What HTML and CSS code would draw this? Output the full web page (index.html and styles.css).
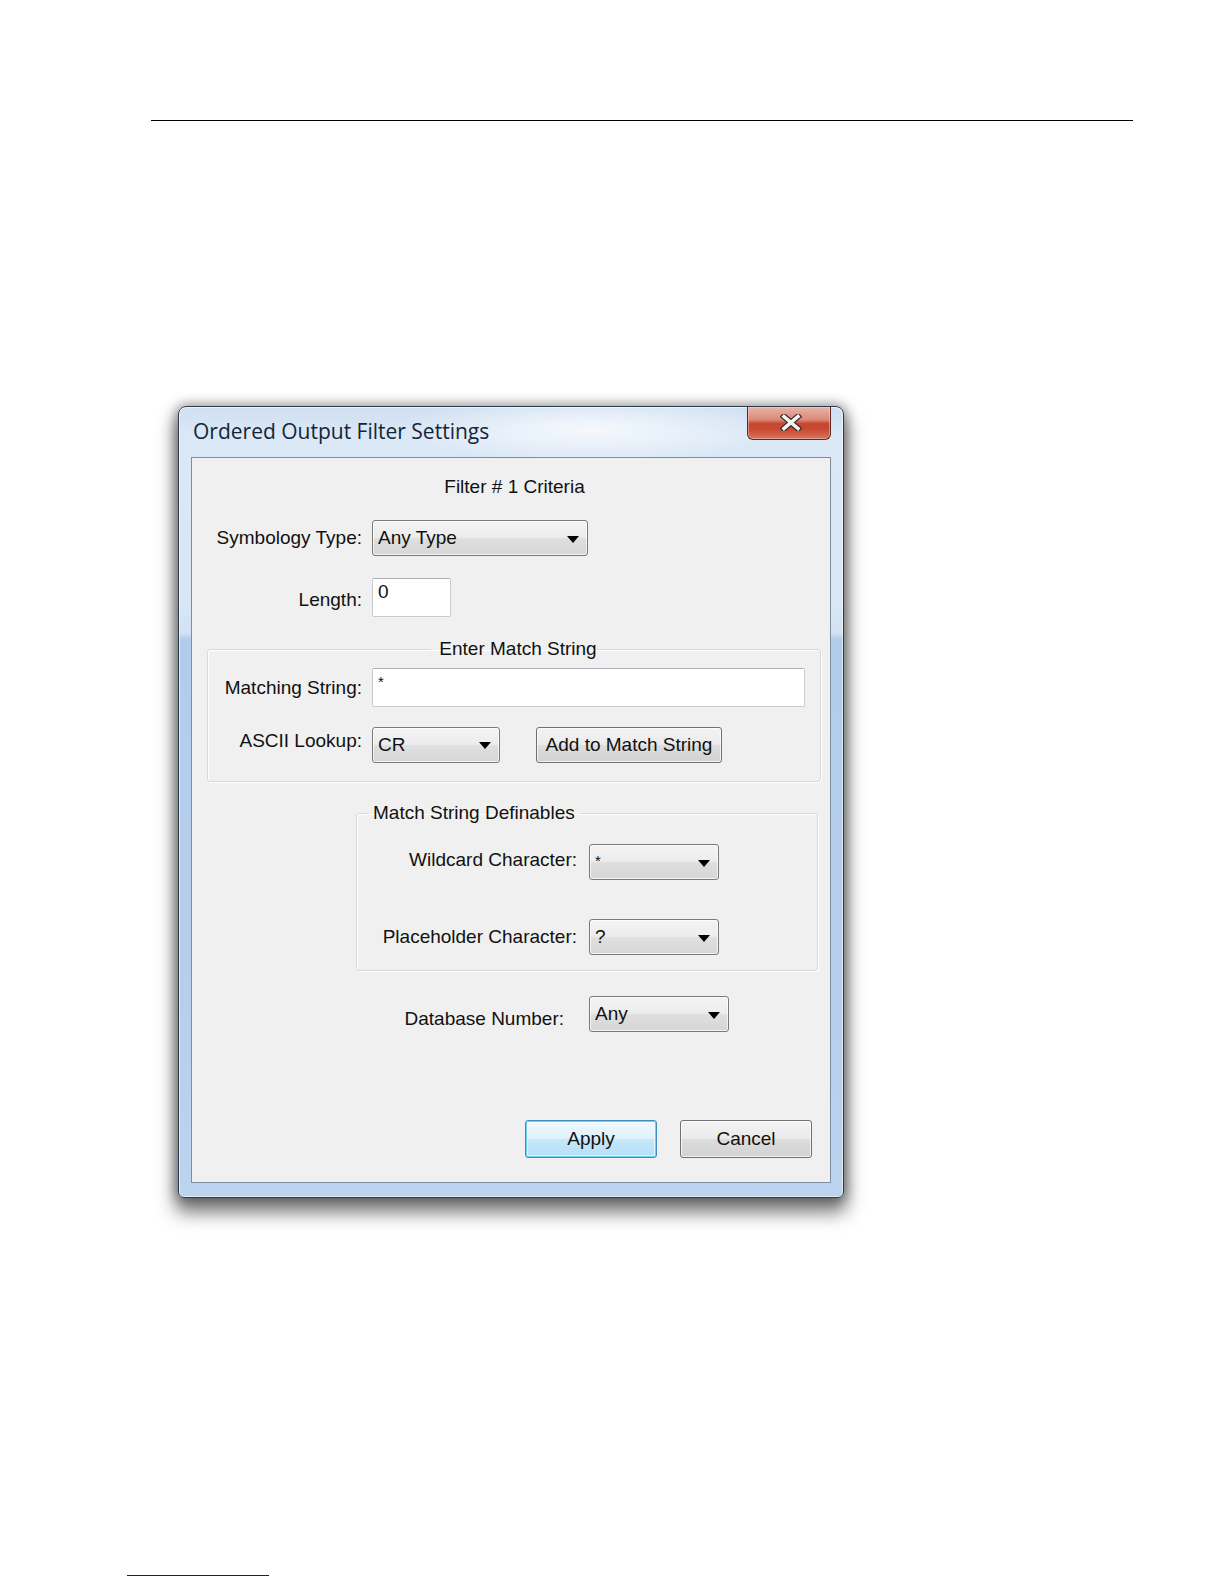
FILE: index.html
```html
<!DOCTYPE html>
<html lang="en">
<head>
<meta charset="utf-8">
<title>Ordered Output Filter Settings</title>
<link rel="stylesheet" href="styles.css">
</head>
<body>
<div class="page">
  <div class="rule-top"></div>

  <div class="window">
    <div class="titlebar">
      <div class="title">Ordered Output Filter Settings</div>
      <div class="close-btn">
        <svg width="22" height="17" viewBox="0 0 22 17" aria-hidden="true">
          <path d="M4 2.5 L18 14.5 M18 2.5 L4 14.5" stroke="#3b2a28" stroke-width="6" stroke-linecap="square" fill="none"/>
          <path d="M4 2.5 L18 14.5 M18 2.5 L4 14.5" stroke="#f4f4f4" stroke-width="3.6" stroke-linecap="square" fill="none"/>
        </svg>
      </div>
    </div>

    <div class="panel">
      <div class="heading">Filter # 1 Criteria</div>

      <div class="row row-symb">
        <div class="lbl lbl-main">Symbology Type:</div>
        <div class="combo combo-symb"><span class="combo-text">Any Type</span><svg class="arrow" width="12" height="7" viewBox="0 0 12 7"><path d="M0 0 H12 L6 7 Z" fill="#000"/></svg></div>
      </div>

      <div class="row row-len">
        <div class="lbl lbl-main lbl-len">Length:</div>
        <div class="textbox textbox-len">0</div>
      </div>

      <fieldset class="group group-match">
        <legend class="legend legend-center">Enter Match String</legend>
        <div class="row row-matching">
          <div class="lbl lbl-g1">Matching String:</div>
          <div class="textbox textbox-match">*</div>
        </div>
        <div class="row row-ascii">
          <div class="lbl lbl-g1 lbl-ascii">ASCII Lookup:</div>
          <div class="combo combo-ascii"><span class="combo-text">CR</span><svg class="arrow" width="12" height="7" viewBox="0 0 12 7"><path d="M0 0 H12 L6 7 Z" fill="#000"/></svg></div>
          <div class="btn btn-add">Add to Match String</div>
        </div>
      </fieldset>

      <fieldset class="group group-defs">
        <legend class="legend legend-left">Match String Definables</legend>
        <div class="row row-wild">
          <div class="lbl lbl-g2 lbl-wild">Wildcard Character:</div>
          <div class="combo combo-char"><span class="combo-text combo-star">*</span><svg class="arrow" width="12" height="7" viewBox="0 0 12 7"><path d="M0 0 H12 L6 7 Z" fill="#000"/></svg></div>
        </div>
        <div class="row row-place">
          <div class="lbl lbl-g2">Placeholder Character:</div>
          <div class="combo combo-char"><span class="combo-text">?</span><svg class="arrow" width="12" height="7" viewBox="0 0 12 7"><path d="M0 0 H12 L6 7 Z" fill="#000"/></svg></div>
        </div>
      </fieldset>

      <div class="row row-db">
        <div class="lbl lbl-db">Database Number:</div>
        <div class="combo combo-db"><span class="combo-text">Any</span><svg class="arrow" width="12" height="7" viewBox="0 0 12 7"><path d="M0 0 H12 L6 7 Z" fill="#000"/></svg></div>
      </div>

      <div class="actions">
        <div class="btn btn-default">Apply</div>
        <div class="btn btn-cancel">Cancel</div>
      </div>
    </div>
  </div>

  <div class="rule-bottom"></div>
</div>
</body>
</html>
```

FILE: styles.css
```css
html, body {
  margin: 0;
  padding: 0;
  background: #ffffff;
}

.page {
  padding-top: 120px;
  font-family: "Liberation Sans", Arial, sans-serif;
  font-size: 19px;
  color: #111;
}

.rule-top {
  margin-left: 151px;
  width: 982px;
  height: 1px;
  background: #000;
}

.rule-bottom {
  margin-top: 377px;
  margin-left: 127px;
  width: 142px;
  height: 1px;
  background: #17167a;
}

/* ---------- window frame ---------- */
.window {
  margin-top: 285px;
  margin-left: 178px;
  width: 666px;
  height: 792px;
  box-sizing: border-box;
  display: flex;
  flex-direction: column;
  padding: 0 12px 14px 12px;
  border: 1px solid #2f3b48;
  border-radius: 8px 8px 6px 6px;
  background:
    radial-gradient(ellipse 190px 34px at 62% 22px, rgba(255,255,255,0.75), rgba(255,255,255,0) 100%),
    linear-gradient(to bottom, #cfe0f3 0px, #dbe8f6 30px, #d8e6f5 200px, #d2e2f3 226px, #b2cdec 232px, #b6cfec 600px, #bcd4ee 100%);
  box-shadow:
    inset 0 0 0 1px rgba(255,255,255,0.55),
    0 12px 18px 3px rgba(0,0,0,0.5),
    0 0 12px 2px rgba(0,0,0,0.35);
}

.titlebar {
  height: 50px;
  flex: none;
  display: flex;
  justify-content: space-between;
  align-items: flex-start;
}

.title {
  margin-top: 11px;
  margin-left: 2px;
  font-family: "Open Sans", "Noto Sans", sans-serif;
  font-size: 21px;
  line-height: 26px;
  color: #14253a;
}

.close-btn {
  width: 84px;
  height: 33px;
  box-sizing: border-box;
  border: 1px solid #5b2a24;
  border-top: none;
  border-radius: 0 0 6px 6px;
  background: linear-gradient(to bottom, #e9b3a8 0%, #d98a78 40%, #c8462f 52%, #c74a32 70%, #d9765f 100%);
  box-shadow: inset 0 0 0 1px rgba(255,220,210,0.45);
  display: flex;
  align-items: center;
  justify-content: center;
}

.close-btn svg {
  display: block;
  margin-top: -1px;
  margin-left: 4px;
}

/* ---------- client panel ---------- */
.panel {
  flex: 1;
  box-sizing: border-box;
  background: #f0f0f0;
  border: 1px solid #7f8e9e;
  display: flex;
  flex-direction: column;
}

.heading {
  margin-top: 18px;
  line-height: 22px;
  text-align: center;
  padding-left: 7px;
}

.row {
  display: flex;
  align-items: center;
}

.lbl {
  flex: none;
  text-align: right;
  line-height: 22px;
  white-space: nowrap;
}

.lbl-main { width: 170px; margin-right: 10px; }
.lbl-g1 { width: 154px; margin-right: 10px; }
.lbl-g2 { width: 220px; margin-right: 12px; }
.lbl-db { width: 372px; margin-right: 25px; margin-top: 10px; }

.lbl-len { margin-top: 4px; }
.lbl-ascii { margin-top: -8px; }
.lbl-wild { margin-top: -4px; }

.row-symb { margin-top: 22px; }
.row-len { margin-top: 22px; }
.row-matching { margin-top: 8px; }
.row-ascii { margin-top: 19px; }
.row-wild { margin-top: 20px; }
.row-place { margin-top: 39px; }
.row-db { margin-top: 25px; }

/* ---------- controls ---------- */
.combo {
  flex: none;
  box-sizing: border-box;
  height: 36px;
  display: flex;
  align-items: center;
  justify-content: space-between;
  padding: 0 8px 0 5px;
  border: 1px solid #7a7a7a;
  border-radius: 3px;
  background: linear-gradient(to bottom, #f4f4f4 0%, #ececec 48%, #dfdfdf 52%, #d6d6d6 100%);
  box-shadow: inset 0 0 0 1px rgba(255,255,255,0.7);
}

.combo-text {
  line-height: 22px;
}

.combo-star {
  font-size: 15px;
  align-self: flex-start;
  margin-top: 5px;
}

.arrow {
  display: block;
  margin-top: 2px;
}

.combo-symb { width: 216px; }
.combo-ascii { width: 128px; }
.combo-char { width: 130px; }
.combo-db { width: 140px; }

.textbox {
  flex: none;
  box-sizing: border-box;
  height: 39px;
  background: #fff;
  border: 1px solid #c8ccd2;
  border-top-color: #aeb2b8;
  border-radius: 2px;
  padding: 2px 5px;
  line-height: 22px;
}

.textbox-len { width: 79px; }
.textbox-match { width: 433px; font-size: 15px; }

.btn {
  flex: none;
  box-sizing: border-box;
  display: flex;
  align-items: center;
  justify-content: center;
  border: 1px solid #707070;
  border-radius: 3px;
  background: linear-gradient(to bottom, #f3f3f3 0%, #ebebeb 48%, #dddddd 52%, #d2d2d2 100%);
  box-shadow: inset 0 0 0 1px rgba(255,255,255,0.7);
  white-space: nowrap;
}

.btn-add {
  width: 186px;
  height: 36px;
  margin-left: 36px;
  margin-top: 1px;
}

.actions {
  margin-top: 88px;
  display: flex;
  justify-content: flex-end;
  gap: 23px;
  padding-right: 18px;
}

.actions .btn {
  width: 132px;
  height: 38px;
}

.btn-default {
  border-color: #3c8dc4;
  background: linear-gradient(to bottom, #eef8fe 0%, #dff2fc 48%, #c6e8fa 52%, #b4def6 100%);
  box-shadow: inset 0 0 0 1px #6fd0f6, inset 0 0 0 2px rgba(255,255,255,0.6);
}

/* ---------- group boxes ---------- */
.group {
  margin: 0;
  padding: 0;
  min-inline-size: 0;
  box-sizing: border-box;
  border: 1px solid #d5dadf;
  border-radius: 3px;
  box-shadow: inset 1px 1px 0 #ffffff, 1px 1px 0 #ffffff;
}

.legend {
  padding: 0 4px;
  line-height: 22px;
}

.legend-center {
  margin-left: auto;
  margin-right: auto;
  position: relative;
  left: 4px;
}

.legend-left {
  margin-left: 12px;
}

.group-match {
  margin-top: 21px;
  margin-left: 15px;
  width: 614px;
  padding-bottom: 18px;
}

.group-defs {
  margin-top: 20px;
  margin-left: 164px;
  width: 462px;
  padding-bottom: 15px;
}
```
